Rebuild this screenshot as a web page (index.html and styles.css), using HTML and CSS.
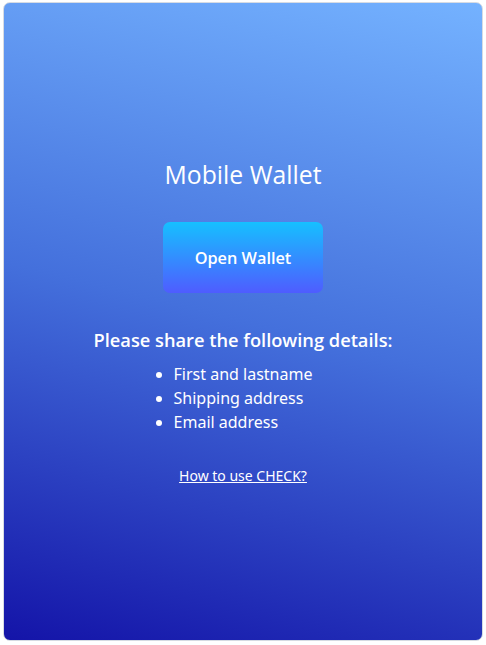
FILE: index.html
```html
<!DOCTYPE html>
<html>
<head>
<meta charset="utf-8">
<link rel="stylesheet" href="styles.css">
</head>
<body>
<main class="card">
  <h1 class="title">Mobile Wallet</h1>
  <button class="open-btn">Open Wallet</button>
  <h2 class="details-title">Please share the following details:</h2>
  <ul class="details-list">
    <li>First and lastname</li>
    <li>Shipping address</li>
    <li>Email address</li>
  </ul>
  <a class="help-link" href="#">How to use CHECK?</a>
</main>
</body>
</html>
```
FILE: styles.css
```css
html, body {
  margin: 0;
  padding: 0;
  background: #ffffff;
}
body {
  padding: 2px 3px 4px 3px;
  font-family: "Noto Sans", "Open Sans", sans-serif;
}
.card {
  box-sizing: border-box;
  width: 480px;
  height: 639px;
  border: 1px solid #d6dbe3;
  border-radius: 7px;
  background: linear-gradient(194deg, #74b2ff 0%, #4470dc 50%, #1414a8 100%);
  color: #ffffff;
  display: flex;
  flex-direction: column;
  align-items: center;
  padding-top: 155px;
}
.title {
  margin: 0;
  font-family: "Open Sans", "Noto Sans", sans-serif;
  font-size: 24.75px;
  font-weight: 400;
  line-height: 34px;
}
.open-btn {
  margin-top: 30px;
  width: 160px;
  height: 71px;
  border: none;
  border-radius: 7px;
  background: linear-gradient(180deg, #16c0ff 0%, #4f5cff 100%);
  color: #ffffff;
  font-family: "Open Sans", "Noto Sans", sans-serif;
  font-size: 16.3px;
  font-weight: 600;
}
.details-title {
  margin: 34px 0 0 0;
  font-family: "Open Sans", "Noto Sans", sans-serif;
  font-size: 18.25px;
  font-weight: 600;
  line-height: 26px;
}
.details-list {
  margin: 9px 0 0 0;
  padding: 0;
  font-size: 16px;
  line-height: 24px;
  display: inline-block;
  text-align: left;
}
.help-link {
  margin-top: 32px;
  color: #ffffff;
  font-size: 14px;
  line-height: 20px;
  text-decoration: underline;
}
```
